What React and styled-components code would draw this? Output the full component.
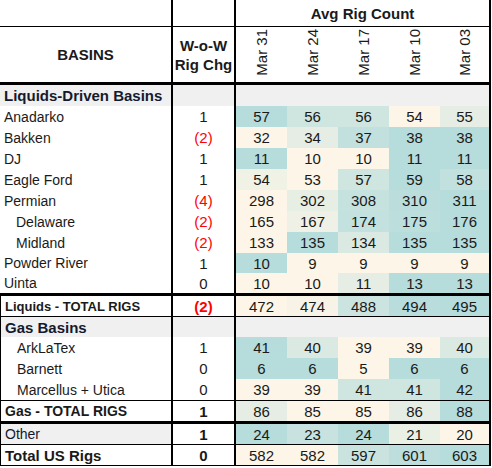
import styled, { createGlobalStyle } from 'styled-components';

const GlobalStyle = createGlobalStyle`
  body {
    margin: 0;
    background: #fff;
    font-family: 'Liberation Sans', Arial, sans-serif;
  }
`;

const CREAM = [253, 246, 232];
const TEAL = [182, 220, 220];

const dates = ['Mar 31', 'Mar 24', 'Mar 17', 'Mar 10', 'Mar 03'];

const liquids = [
  { name: 'Anadarko', chg: 1, vals: [57, 56, 56, 54, 55] },
  { name: 'Bakken', chg: -2, vals: [32, 34, 37, 38, 38] },
  { name: 'DJ', chg: 1, vals: [11, 10, 10, 11, 11] },
  { name: 'Eagle Ford', chg: 1, vals: [54, 53, 57, 59, 58] },
  { name: 'Permian', chg: -4, vals: [298, 302, 308, 310, 311] },
  { name: 'Delaware', chg: -2, vals: [165, 167, 174, 175, 176], indent: true },
  { name: 'Midland', chg: -2, vals: [133, 135, 134, 135, 135], indent: true },
  { name: 'Powder River', chg: 1, vals: [10, 9, 9, 9, 9], h: 20 },
  { name: 'Uinta', chg: 0, vals: [10, 10, 11, 13, 13], h: 20 },
];

const gas = [
  { name: 'ArkLaTex', chg: 1, vals: [41, 40, 39, 39, 40] },
  { name: 'Barnett', chg: 0, vals: [6, 6, 5, 6, 6] },
  { name: 'Marcellus + Utica', chg: 0, vals: [39, 39, 41, 41, 42] },
];

const rules = {
  thick: '3px solid #000',
  thin: '1px solid #000',
  none: '0',
};

const Table = styled.table`
  border-collapse: separate;
  border-spacing: 0;
  table-layout: fixed;
  width: 491px;
  color: #1a1a1a;
  font-size: 14px;
`;

const HeadRow = styled.tr`
  height: ${(p) => p.$h}px;
`;

const HeadCell = styled.th`
  padding: 0;
  font-weight: 700;
  font-size: 15px;
  line-height: 19px;
  text-align: center;
  vertical-align: middle;
  border-right: 2px solid #000;
  border-bottom: ${(p) => rules[p.$rule || 'thin']};
`;

const DateCell = styled.th`
  padding: 0 0 3px;
  font-weight: 400;
  font-size: 15px;
  vertical-align: bottom;
  text-align: center;
  border-bottom: ${rules.thick};
  border-right: ${(p) => (p.$last ? '2px solid #000' : '0')};
`;

const DateText = styled.span`
  display: inline-block;
  writing-mode: vertical-rl;
  transform: rotate(180deg);
  white-space: nowrap;
`;

const Row = styled.tr`
  height: ${(p) => p.$h || 21}px;

  & > td {
    border-top: ${(p) => rules[p.$rule || 'none']};
    border-bottom: ${(p) => (p.$last ? rules.thin : '0')};
  }
`;

const NameCell = styled.td`
  padding: 0 0 0 ${(p) => (p.$indent ? 16 : 4)}px;
  white-space: nowrap;
  font-size: ${(p) => p.$size || 14}px;
  font-weight: ${(p) => (p.$bold ? 700 : 400)};
  color: ${(p) => (p.$navy ? '#141a2e' : '#1a1a1a')};
  background: ${(p) => (p.$gray ? '#f0f0f0' : '#fff')};
  border-right: 2px solid #000;
  border-left: ${(p) => (p.$edge ? '1px solid #000' : '0')};
`;

const ChgCell = styled.td`
  padding: 0;
  text-align: center;
  font-size: 15px;
  font-weight: ${(p) => (p.$bold ? 700 : 400)};
  color: ${(p) => (p.$neg ? '#ff0000' : '#1a1a1a')};
  background: ${(p) => (p.$gray ? '#f0f0f0' : '#fff')};
  border-right: 2px solid #000;
`;

const DataCell = styled.td`
  padding: 0;
  text-align: center;
  font-size: 15px;
  background: ${(p) => (p.$gray ? '#f0f0f0' : 'transparent')};
  border-right: ${(p) => (p.$last ? '2px solid #000' : '0')};
`;

function shade(v, vals) {
  const lo = Math.min(...vals);
  const hi = Math.max(...vals);
  const t = hi === lo ? 0 : (v - lo) / (hi - lo);
  const c = CREAM.map((a, i) => Math.round(a + (TEAL[i] - a) * t));
  return `rgb(${c.join(',')})`;
}

const fmt = (n) => (n < 0 ? `(${-n})` : `${n}`);

function DataCells({ vals }) {
  return vals.map((v, i) => (
    <DataCell key={i} $last={i === vals.length - 1} style={{ background: shade(v, vals) }}>
      {v}
    </DataCell>
  ));
}

function GrayCells() {
  return dates.map((d, i) => <DataCell key={d} $gray $last={i === dates.length - 1} />);
}

function BasinRow({ row, edge }) {
  return (
    <Row $h={row.h}>
      <NameCell $indent={row.indent} $edge={edge}>{row.name}</NameCell>
      <ChgCell $neg={row.chg < 0}>{fmt(row.chg)}</ChgCell>
      <DataCells vals={row.vals} />
    </Row>
  );
}

export default function App() {
  return (
    <>
      <GlobalStyle />
      <Table>
        <colgroup>
          <col style={{ width: 173 }} />
          <col style={{ width: 63 }} />
          {dates.map((d) => (
            <col key={d} style={{ width: 51 }} />
          ))}
        </colgroup>
        <thead>
          <HeadRow $h={27}>
            <HeadCell />
            <HeadCell />
            <HeadCell colSpan={5}>Avg Rig Count</HeadCell>
          </HeadRow>
          <HeadRow $h={58}>
            <HeadCell $rule="thick">BASINS</HeadCell>
            <HeadCell $rule="thick">
              W-o-W
              <br />
              Rig Chg
            </HeadCell>
            {dates.map((d, i) => (
              <DateCell key={d} $last={i === dates.length - 1}>
                <DateText>{d}</DateText>
              </DateCell>
            ))}
          </HeadRow>
        </thead>
        <tbody>
          <Row>
            <NameCell $bold $gray $navy $size={15}>Liquids-Driven Basins</NameCell>
            <ChgCell $gray />
            <GrayCells />
          </Row>
          {liquids.map((r) => (
            <BasinRow key={r.name} row={r} />
          ))}
          <Row $rule="thick" $h={23}>
            <NameCell $bold $size={13} $edge>Liquids - TOTAL RIGS</NameCell>
            <ChgCell $bold $neg>(2)</ChgCell>
            <DataCells vals={[472, 474, 488, 494, 495]} />
          </Row>
          <Row $rule="thin" $h={21}>
            <NameCell $bold $gray $navy $size={15} $edge>Gas Basins</NameCell>
            <ChgCell $gray />
            <GrayCells />
          </Row>
          {gas.map((r) => (
            <BasinRow key={r.name} row={{ ...r, indent: true }} edge />
          ))}
          <Row $rule="thin" $h={21}>
            <NameCell $bold $size={14} $edge>Gas - TOTAL RIGS</NameCell>
            <ChgCell $bold>1</ChgCell>
            <DataCells vals={[86, 85, 85, 86, 88]} />
          </Row>
          <Row $rule="thick" $h={23}>
            <NameCell $gray $navy $edge>Other</NameCell>
            <ChgCell $bold>1</ChgCell>
            <DataCells vals={[24, 23, 24, 21, 20]} />
          </Row>
          <Row $rule="thin" $h={22} $last>
            <NameCell $bold $size={15} $edge>Total US Rigs</NameCell>
            <ChgCell $bold>0</ChgCell>
            <DataCells vals={[582, 582, 597, 601, 603]} />
          </Row>
        </tbody>
      </Table>
    </>
  );
}
